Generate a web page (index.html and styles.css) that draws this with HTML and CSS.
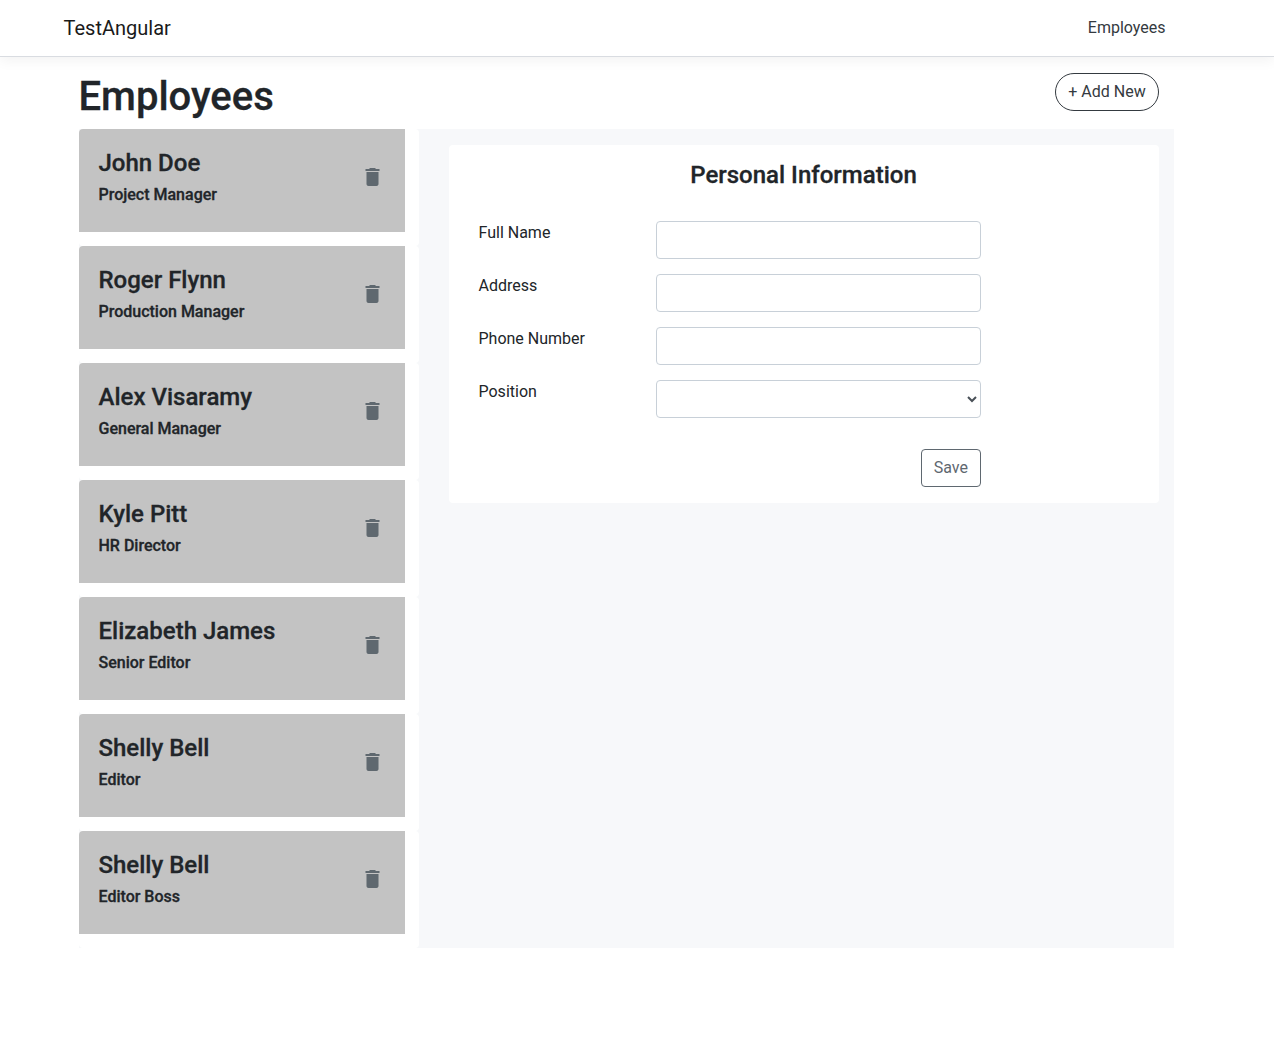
FILE: index.html
```html
<!DOCTYPE html>
<html lang="en">
<head>
<meta charset="utf-8">
<title>TestAngular</title>
<link rel="stylesheet" href="styles.css">
</head>
<body>
<svg class="defs" width="0" height="0"><symbol id="trash" viewBox="0.5 0 24 24"><path d="M6 19c0 1.1.9 2 2 2h8c1.1 0 2-.9 2-2V7H6v12zM19 4h-3.5l-1-1h-5l-1 1H5v2h14V4z"/></symbol></svg>
<header class="navbar">
  <a class="brand">TestAngular</a>
  <a class="nav-link">Employees</a>
</header>
<main class="container">
  <div class="heading">
    <h1>Employees</h1>
    <button class="btn add">+ Add New</button>
  </div>
  <div class="columns">
    <ul class="list">
      <li class="item"><div class="card"><div><h4>John Doe</h4><p>Project Manager</p></div><svg class="icon"><use href="#trash"/></svg></div></li>
      <li class="item"><div class="card"><div><h4>Roger Flynn</h4><p>Production Manager</p></div><svg class="icon"><use href="#trash"/></svg></div></li>
      <li class="item"><div class="card"><div><h4>Alex Visaramy</h4><p>General Manager</p></div><svg class="icon"><use href="#trash"/></svg></div></li>
      <li class="item"><div class="card"><div><h4>Kyle Pitt</h4><p>HR Director</p></div><svg class="icon"><use href="#trash"/></svg></div></li>
      <li class="item"><div class="card"><div><h4>Elizabeth James</h4><p>Senior Editor</p></div><svg class="icon"><use href="#trash"/></svg></div></li>
      <li class="item"><div class="card"><div><h4>Shelly Bell</h4><p>Editor</p></div><svg class="icon"><use href="#trash"/></svg></div></li>
      <li class="item"><div class="card"><div><h4>Shelly Bell</h4><p>Editor Boss</p></div><svg class="icon"><use href="#trash"/></svg></div></li>
    </ul>
    <section class="detail">
      <form class="panel">
        <h2>Personal Information</h2>
        <div class="row"><label for="name">Full Name</label><input id="name" class="control"></div>
        <div class="row"><label for="address">Address</label><input id="address" class="control"></div>
        <div class="row"><label for="phone">Phone Number</label><input id="phone" class="control"></div>
        <div class="row"><label for="position">Position</label><select id="position" class="control"><option></option></select></div>
        <div class="actions"><button type="button" class="btn save">Save</button></div>
      </form>
    </section>
  </div>
</main>
</body>
</html>
```
FILE: styles.css
```css
* { box-sizing: border-box; }
body { margin: 0; background: #fff; color: #212529; font: 400 16px/24px Roboto, sans-serif; }
h1, h2, h4, p, ul { margin: 0; padding: 0; }
h1, h2, h4, p { -webkit-text-stroke: .3px #212529; }
.defs { display: block; }
.navbar { height: 57px; padding: 0 108.5px 0 63.5px; display: flex; align-items: center; justify-content: space-between; border-bottom: 1px solid #d9dce1; box-shadow: 0 4px 12px rgba(0,0,0,.05); }
.brand { font-size: 20px; line-height: 30px; color: #1a1a1a; }
.nav-link { color: #343a40; }
.container { width: 1095px; margin-left: 79px; }
.heading { height: 72px; padding: 16px 15px 0 0; display: flex; justify-content: space-between; align-items: flex-start; }
h1 { margin-left: -.5px; font-size: 40px; line-height: 48px; font-weight: 500; }
.btn { height: 38px; padding: 6px 12px; font: inherit; background: #fff; border: 1px solid #343a40; color: #343a40; }
.add { width: 104px; border-radius: 19px; }
.columns { display: flex; background: #f7f8fa; }
.list { width: 340px; list-style: none; }
.item { padding: 0 14px 14px 0; background: #fff; border-radius: 4px; }
.card { height: 103px; padding: 20px 20.5px 0 19.5px; background: #c3c3c3; border-radius: 4px 0 0 0; display: flex; justify-content: space-between; }
h4 { font-size: 24px; line-height: 29px; font-weight: 500; }
p { font-weight: 500; line-height: 24px; margin-top: 5px; }
.icon { width: 24px; height: 24px; margin-top: 16px; fill: #5f686f; }
.detail { flex: 1; padding: 16px 15px 0 30px; }
.panel { height: 358px; padding: 16px 0 0 29.5px; background: #fff; border-radius: 4px; }
h2 { margin: 0 0 31px -30.5px; font-size: 24px; line-height: 29px; font-weight: 500; text-align: center; }
.row { display: flex; height: 38px; margin-bottom: 15px; }
.row label { width: 177.5px; color: #212529; }
.control { width: 325px; height: 38px; padding: 6px 12px; font: inherit; color: #495057; background: #fff; border: 1px solid #c8d0d8; border-radius: 4px; }
.actions { display: flex; justify-content: flex-end; width: 502.5px; margin-top: 31px; }
.save { border-color: #5f6870; color: #5f6870; border-radius: 4px; }
```
